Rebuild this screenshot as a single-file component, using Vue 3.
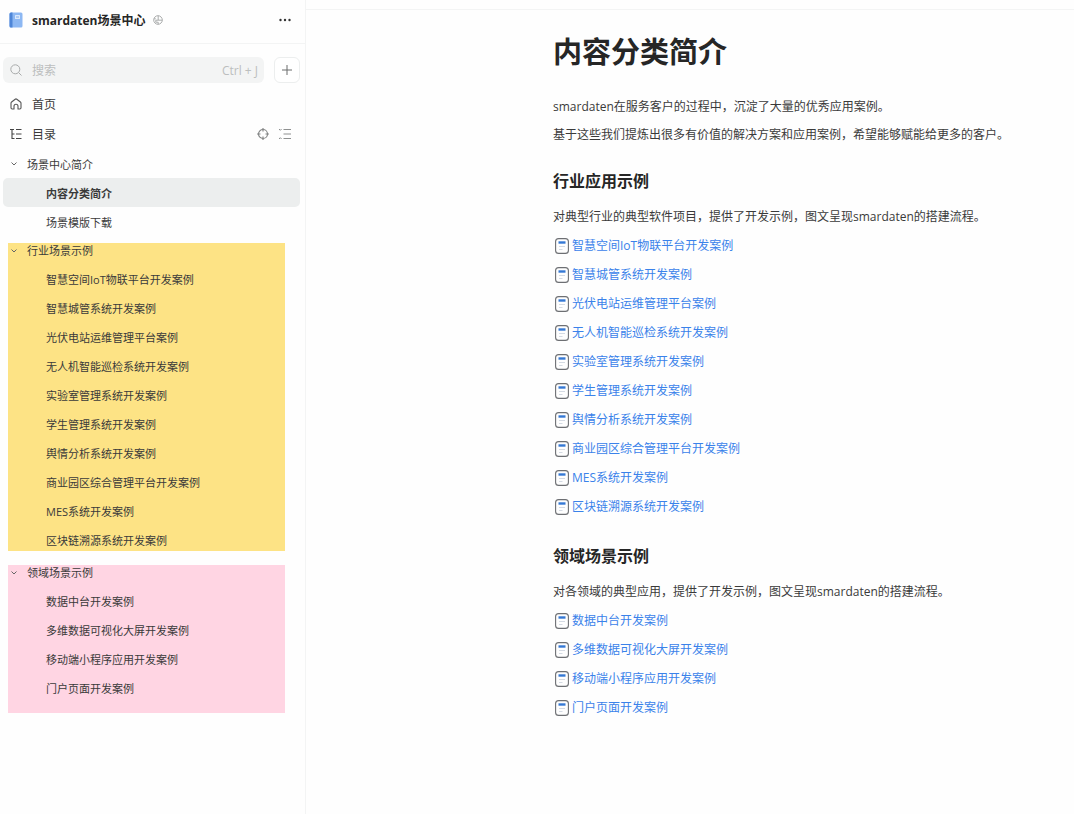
<script setup>
import { ref } from 'vue'

const keyword = ref('')

const industry = [
  '智慧空间IoT物联平台开发案例',
  '智慧城管系统开发案例',
  '光伏电站运维管理平台案例',
  '无人机智能巡检系统开发案例',
  '实验室管理系统开发案例',
  '学生管理系统开发案例',
  '舆情分析系统开发案例',
  '商业园区综合管理平台开发案例',
  'MES系统开发案例',
  '区块链溯源系统开发案例'
]

const domain = [
  '数据中台开发案例',
  '多维数据可视化大屏开发案例',
  '移动端小程序应用开发案例',
  '门户页面开发案例'
]

const groups = [
  { id: 'industry', title: '行业场景示例', items: industry },
  { id: 'domain', title: '领域场景示例', items: domain }
]

const sections = [
  {
    title: '行业应用示例',
    intro: '对典型行业的典型软件项目，提供了开发示例，图文呈现smardaten的搭建流程。',
    items: industry
  },
  {
    title: '领域场景示例',
    intro: '对各领域的典型应用，提供了开发示例，图文呈现smardaten的搭建流程。',
    items: domain
  }
]
</script>

<template>
  <div class="page">
    <aside class="sidebar">
      <header class="book">
        <svg class="book-icon" width="14" height="16" viewBox="0 0 14 16" aria-hidden="true">
          <rect x="0.5" y="0.5" width="13" height="15" rx="1.5" fill="#8db8f3" />
          <path d="M.5 2A1.500 1.500 0 0 1 2 .5h1.500v15H2A1.500 1.500 0 0 1 .5 14z" fill="#4e86d8" />
          <rect x="6" y="3" width="5" height="4" rx="0.5" fill="#d9e8fc" />
          <path d="M7 5h3" stroke="#6f9fe2" stroke-width="0.8" />
        </svg>
        <span class="book-name">smardaten场景中心</span>
        <svg class="globe" width="10" height="10" viewBox="0 0 10 10" fill="none" stroke="#a3a5a5" stroke-width="0.9" aria-hidden="true">
          <circle cx="5" cy="5" r="4.3" />
          <path d="M5.200.8v4.400h4M5.200 5.200H2.800v2h2.400v2M1 3.800h1.800" />
        </svg>
        <button class="icon-btn more" type="button" aria-label="更多">
          <svg width="12" height="4" viewBox="0 0 12 4" fill="#333">
            <circle cx="1.5" cy="2" r="1.2" />
            <circle cx="6" cy="2" r="1.2" />
            <circle cx="10.5" cy="2" r="1.2" />
          </svg>
        </button>
      </header>

      <div class="search-row">
        <label class="search">
          <svg width="12" height="12" viewBox="0 0 12 12" fill="none" stroke="#a9abab" aria-hidden="true">
            <circle cx="5.3" cy="5.3" r="4.5" />
            <path d="M8.600 8.600 11.500 11.500" />
          </svg>
          <input v-model="keyword" type="text" placeholder="搜索" aria-label="搜索" />
          <span class="hotkey">Ctrl + J</span>
        </label>
        <button class="add" type="button" aria-label="新建">
          <svg width="10" height="10" viewBox="0 0 10 10" stroke="#6a6c6c">
            <path d="M5 0v10M0 5h10" />
          </svg>
        </button>
      </div>

      <nav>
        <a class="nav-item" href="#home">
          <svg width="12" height="12" viewBox="0 0 12 12" fill="none" stroke="#555" stroke-width="1.1" stroke-linejoin="round" aria-hidden="true">
            <path d="M4 11H2.200A1.200 1.200 0 0 1 1 9.800V5.200a1.500 1.500 0 0 1 .6-1.200L5.200 1.200a1.300 1.300 0 0 1 1.600 0L10.400 4a1.500 1.500 0 0 1 .6 1.200v4.600A1.200 1.200 0 0 1 9.800 11H8V8.200a2 2 0 0 0-4 0z" />
          </svg>
          首页
        </a>
        <div class="nav-item">
          <svg width="12" height="12" viewBox="0 0 12 12" fill="none" stroke="#444" stroke-width="1.1" aria-hidden="true">
            <path d="M0 1.500h4M2 1.500v9h2.500M2 6h2.500M6 1.500h5.500M6 6h5.500M6 10.500h5.500" />
          </svg>
          <span class="grow">目录</span>
          <button class="icon-btn" type="button" aria-label="定位">
            <svg width="12" height="12" viewBox="0 0 12 12" fill="none" stroke="#858787" stroke-width="1.2">
              <circle cx="6" cy="6" r="4.5" />
              <path d="M6 0v3.500M6 8.500V12M0 6h3.500M8.500 6H12" />
            </svg>
          </button>
          <button class="icon-btn" type="button" aria-label="收起">
            <svg width="12" height="12" viewBox="0 0 12 12" fill="none" stroke="#8e9090">
              <path d="M4.500 1.500H12M4.500 6H12M4.500 10.500H12" />
              <path d="M0 1l1.300 1.300L2.600 1M0 11l1.300-1.300L2.600 11" />
            </svg>
          </button>
        </div>

        <div class="row parent">
          <svg class="chevron" width="6" height="4" viewBox="0 0 6 4" fill="none" stroke="#666" aria-hidden="true">
            <path d="M.5.5 3 3 5.500.5" />
          </svg>
          场景中心简介
        </div>
        <a class="row child active" href="#intro">内容分类简介</a>
        <a class="row child" href="#download">场景模版下载</a>

        <div v-for="g in groups" :key="g.id" class="group" :class="g.id">
          <div class="group-title">
            <svg class="chevron" width="6" height="4" viewBox="0 0 6 4" fill="none" stroke="#666" aria-hidden="true">
              <path d="M.5.5 3 3 5.500.5" />
            </svg>
            {{ g.title }}
          </div>
          <a v-for="item in g.items" :key="item" class="group-link" href="#case">{{ item }}</a>
        </div>
      </nav>
    </aside>

    <main class="content">
      <h1>内容分类简介</h1>
      <p>smardaten在服务客户的过程中，沉淀了大量的优秀应用案例。</p>
      <p>基于这些我们提炼出很多有价值的解决方案和应用案例，希望能够赋能给更多的客户。</p>

      <section v-for="s in sections" :key="s.title">
        <h2>{{ s.title }}</h2>
        <p>{{ s.intro }}</p>
        <ul>
          <li v-for="item in s.items" :key="item">
            <a href="#case">
              <svg width="14" height="16" viewBox="0 0 14 16" fill="none" aria-hidden="true">
                <rect x="0.6" y="0.6" width="12.8" height="14.8" rx="3" stroke="#6d6f73" stroke-width="1.1" />
                <path d="M3.500 4.500h7" stroke="#3478d4" stroke-width="2.4" />
                <path d="M4 8.500h6M4 11.500h3.500" stroke="#cfd6e0" stroke-width="0.9" />
              </svg>
              {{ item }}
            </a>
          </li>
        </ul>
      </section>
    </main>
  </div>
</template>

<style>
body {
  margin: 0;
  background: #fefefe;
}
</style>

<style scoped>
.page {
  display: flex;
  min-height: 100vh;
  font-family: "Open Sans", "Noto Sans CJK SC", sans-serif;
  font-size: 12px;
  color: #3a3a3a;
}

a {
  color: inherit;
  text-decoration: none;
}

button {
  padding: 0;
  cursor: pointer;
}

svg {
  flex: none;
}

.sidebar {
  flex: 0 0 306px;
  box-sizing: border-box;
  border-right: 1px solid #f3f4f4;
}

.book {
  display: flex;
  align-items: center;
  height: 44px;
  box-sizing: border-box;
  padding: 0 14px 4px 9px;
  border-bottom: 1px solid #f3f4f4;
}

.book-name {
  margin-left: 9px;
  font-weight: 700;
  color: #262626;
}

.globe {
  margin-left: 8px;
}

.icon-btn {
  display: flex;
  border: 0;
  background: none;
}

.more {
  margin-left: auto;
}

.search-row {
  display: flex;
  gap: 10px;
  padding: 13px 5px 6px 3px;
}

.search {
  display: flex;
  flex: 1;
  align-items: center;
  min-width: 0;
  height: 26px;
  padding: 0 6px 0 7px;
  border-radius: 6px;
  background: #f3f4f4;
}

.search input {
  flex: 1;
  min-width: 0;
  margin-left: 10px;
  padding: 0;
  border: 0;
  outline: 0;
  background: none;
  font: inherit;
}

.search input::placeholder {
  color: #bcbebe;
}

.hotkey {
  font-size: 12px;
  color: #bcbebe;
}

.add {
  display: flex;
  align-items: center;
  justify-content: center;
  width: 26px;
  height: 26px;
  border: 1px solid #eceeee;
  border-radius: 6px;
  background: #fff;
}

.nav-item {
  display: flex;
  align-items: center;
  gap: 10px;
  height: 30px;
  padding: 0 14px 0 10px;
}

.grow {
  flex: 1;
}

.row {
  display: flex;
  align-items: center;
  height: 29px;
  font-size: 11px;
}

.parent {
  padding-left: 11px;
}

.chevron {
  margin-right: 10px;
}

.child {
  margin: 0 5px 0 3px;
  padding-left: 43px;
}

.active {
  border-radius: 5px;
  background: #eceeee;
  font-weight: 700;
}

.group {
  display: flex;
  flex-direction: column;
  gap: 13px;
  margin: 7px 20px 14px 8px;
  font-size: 11px;
  line-height: 16px;
}

.industry {
  padding-bottom: 2px;
  background: #fde385;
}

.domain {
  padding-bottom: 16px;
  background: #ffd5e3;
}

.group-title {
  display: flex;
  align-items: center;
  padding-left: 3px;
}

.group-link {
  padding-left: 38px;
}

.content {
  flex: 1;
  min-width: 0;
  margin-top: 9px;
  padding: 22px 24px 40px 23%;
  border-top: 1px solid #f3f4f4;
}

h1 {
  margin: 0 0 21px;
  font-size: 29px;
  line-height: 40px;
  color: #262626;
}

h2 {
  margin: 18px 0 8px;
  font-size: 16px;
  line-height: 28px;
  color: #262626;
}

p {
  margin: 0;
  line-height: 28px;
}

ul {
  margin: 0;
  padding: 0 0 3px;
  list-style: none;
}

li a {
  display: flex;
  align-items: center;
  gap: 3px;
  padding-left: 2px;
  line-height: 29px;
  color: #3a82ea;
}
</style>
